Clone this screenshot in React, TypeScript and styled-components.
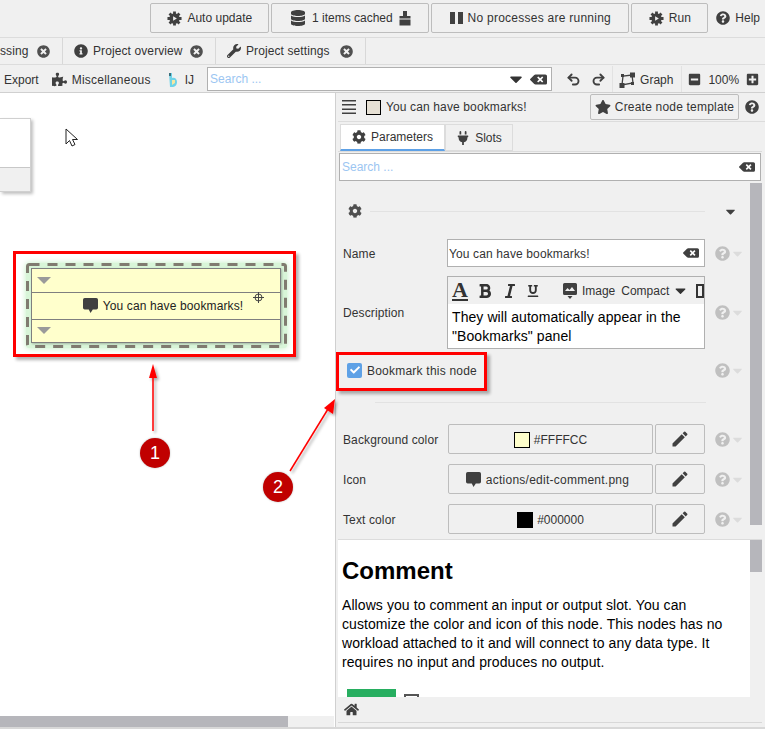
import React from "react";
import styled, { createGlobalStyle } from "styled-components";
import {
  FaBackspace,
  FaBold,
  FaCaretDown,
  FaCheck,
  FaCog,
  FaDatabase,
  FaHome,
  FaInfoCircle,
  FaItalic,
  FaMinusSquare,
  FaPlug,
  FaPlusSquare,
  FaPuzzlePiece,
  FaQuestionCircle,
  FaStar,
  FaTimesCircle,
  FaUnderline,
  FaWrench,
} from "react-icons/fa";
import { MdEdit } from "react-icons/md";
import { Redo2, Undo2 } from "lucide-react";

const GlobalStyle = createGlobalStyle`
  html, body {
    margin: 0;
    padding: 0;
    background: #f0f0f0;
  }
  * { box-sizing: border-box; }
`;

function GearPlay() {
  return (
    <svg width="15" height="15" viewBox="0 0 16 16">
      <g stroke="#404040" strokeWidth="3">
        <path d="M8 0.5v15M0.5 8h15M2.7 2.7l10.6 10.6M13.3 2.7L2.7 13.3" />
      </g>
      <circle cx="8" cy="8" r="5.5" fill="#404040" />
      <path d="M6.5 5.5v5l4-2.5z" fill="#f0f0f0" />
    </svg>
  );
}

function Bubble() {
  return (
    <svg width="15" height="15" viewBox="1 1 13 13">
      <path
        d="M2.5 1h10A1.5 1.5 0 0 1 14 2.500v7a1.5 1.5 0 0 1-1.500 1.500H9.500L7.500 14 6 11H2.500A1.5 1.500 0 0 1 1 9.500v-7A1.500 1.500 0 0 1 2.500 1z"
        fill="#404040"
      />
    </svg>
  );
}

function HelpCell() {
  return (
    <HelpWrap>
      <FaQuestionCircle size={15} />
      <FaCaretDown size={15} color="#dcdcdc" />
    </HelpWrap>
  );
}

export default function App() {
  return (
    <Page>
      <GlobalStyle />
      <TopBar>
        <ActionButton $width={119}><GearPlay />Auto update</ActionButton>
        <ActionButton $width={158} $gap={6}>
          <FaDatabase size={16} />
          1 items cached
          <svg width="12" height="15" viewBox="0 0 12 15">
            <rect x="4" y="0" width="4" height="5" fill="#404040" />
            <rect x="0.500" y="5" width="11" height="2.500" fill="#404040" />
            <path d="M0.500 8.500h11V14.500h-11z" fill="#404040" />
          </svg>
        </ActionButton>
        <ActionButton $width={198} $spaced>
          <svg width="13" height="12" viewBox="0 0 13 12">
            <rect width="5" height="12" fill="#404040" />
            <rect x="8" width="5" height="12" fill="#404040" />
          </svg>
          No processes are running
        </ActionButton>
        <ActionButton $width={77}><GearPlay />Run</ActionButton>
        <HelpLink><FaQuestionCircle size={14} />Help</HelpLink>
      </TopBar>

      <TabBar>
        <Tab $width={63}>ssing<TabClose><FaTimesCircle size={13} /></TabClose></Tab>
        <Tab $width={153} $padded><FaInfoCircle size={14} />Project overview<TabClose><FaTimesCircle size={13} /></TabClose></Tab>
        <Tab $width={150} $padded><FaWrench size={14} />Project settings<TabClose><FaTimesCircle size={13} /></TabClose></Tab>
      </TabBar>

      <ToolBar>
        <ToolText>Export</ToolText>
        <ToolText $spaced><FaPuzzlePiece size={15} />Miscellaneous</ToolText>
        <ToolText $gap={8} $indent={5}>
          <svg width="8" height="14" viewBox="0 0 8 14">
            <path d="M0 0h3v5c3-1 5 1 5 4 0 3-2 5-5 5H1z" fill="#6fd3e8" />
            <path d="M3 7h3v3l-3 2z" fill="#f6e7a0" />
            <rect width="2" height="3" fill="#3a6f7d" />
          </svg>
          IJ
        </ToolText>
        <SearchBox $width={345}>
          <SearchPlaceholder>Search ...</SearchPlaceholder>
          <FaCaretDown size={20} color="#333" />
          <FaBackspace size={17} color="#404040" />
        </SearchBox>
        <ToolIcons>
          <Undo2 size={15} strokeWidth={3} />
          <Redo2 size={15} strokeWidth={3} />
        </ToolIcons>
        <ToolDivider />
        <ToolText $gap={5} $right={8}>
          <svg width="16" height="16" viewBox="0 0 16 16">
            <path d="M3 13 4 4 13 3 14 11Z" fill="none" stroke="#404040" strokeWidth="1.300" />
            <rect x="0.500" y="11" width="5" height="5" fill="#404040" />
            <rect x="11" y="0.500" width="5" height="5" fill="#404040" />
            <rect x="2" y="2" width="3" height="3" fill="#404040" />
            <rect x="12" y="10" width="3" height="3" fill="#404040" />
          </svg>
          Graph
        </ToolText>
        <ToolDivider />
        <ZoomGroup>
          <FaMinusSquare size={13} />
          <span>100%</span>
          <FaPlusSquare size={13} />
        </ZoomGroup>
      </ToolBar>

      <Workspace>
        <Canvas>
          <CutNode>
            <CutNodeFooter />
          </CutNode>
          <Cursor width="14" height="20" viewBox="0 0 14 20">
            <path d="M1 1v15l3.500-3.500L7 18l3-1.500-2.500-5H12.500z" fill="#fff" stroke="#222" strokeWidth="1" />
          </Cursor>
          <BookmarkNode>
            <DashOutline width="261" height="85" viewBox="0 0 261 85">
              <rect x="1.500" y="1.500" width="258" height="82" rx="2" fill="none" stroke="#807b70" strokeWidth="3" strokeDasharray="10 8" />
            </DashOutline>
            <NodeBody>
              <NodeSlot><SlotCaret /></NodeSlot>
              <NodeTitle><Bubble /><WideText>You can have bookmarks!</WideText></NodeTitle>
              <NodeSlot><SlotCaret /></NodeSlot>
              <Crosshair width="11" height="11" viewBox="0 0 11 11">
                <circle cx="5.500" cy="5.500" r="3.500" fill="none" stroke="#444" />
                <path d="M5.500 0v11M0 5.500h11" stroke="#444" />
              </Crosshair>
            </NodeBody>
          </BookmarkNode>
          <HScroll><HThumb /></HScroll>
        </Canvas>

        <Inspector>
          <InspectorHead>
            <svg width="14" height="14" viewBox="0 0 14 14">
              <path d="M0 0h14v1.500H0zM0 4h14v1.500H0zM0 8.500h14V10H0zM0 12.500h14V14H0z" fill="#404040" />
            </svg>
            <HeadSwatch />
            <HeadTitle><WideText>You can have bookmarks!</WideText></HeadTitle>
            <TemplateButton><FaStar size={16} />Create node template</TemplateButton>
            <FaQuestionCircle size={14} color="#404040" />
          </InspectorHead>

          <InspectorTabs>
            <InspectorTab $active $width={105}><FaCog size={14} />Parameters</InspectorTab>
            <InspectorTab $width={68}><FaPlug size={14} />Slots</InspectorTab>
          </InspectorTabs>

          <WideSearch>
            <SearchPlaceholder>Search ...</SearchPlaceholder>
            <FaBackspace size={16} color="#404040" />
          </WideSearch>

          <ParamArea>
            <ParamScroll><ParamThumb /></ParamScroll>
            <SectionHead>
              <FaCog size={14} color="#505050" />
              <SectionLine />
              <FaCaretDown size={15} color="#404040" />
            </SectionHead>

            <ParamRow $top={12}>
              <ParamLabel>Name</ParamLabel>
              <TextField>
                <FieldValue><WideText>You can have bookmarks!</WideText></FieldValue>
                <FaBackspace size={16} color="#404040" />
              </TextField>
              <HelpCell />
            </ParamRow>

            <ParamRow $height={73} $top={8}>
              <ParamLabel>Description</ParamLabel>
              <Editor>
                <EditorTools>
                  <LetterA>A</LetterA>
                  <FaBold size={16} />
                  <FaItalic size={16} />
                  <FaUnderline size={12} />
                  <ImageTool>
                    <svg width="14" height="16" viewBox="0 0 14 16">
                      <path d="M1.500 0h11A1.500 1.500 0 0 1 14 1.500v9a1.500 1.500 0 0 1-1.500 1.500h-11A1.500 1.500 0 0 1 0 10.500v-9A1.500 1.500 0 0 1 1.500 0z" fill="#404040" />
                      <path d="M2 8l2.500-3L6.500 7 9 4l3 4z" fill="#f0f0f0" />
                      <path d="M4.500 13h5L7 16z" fill="#404040" />
                    </svg>
                    Image
                  </ImageTool>
                  <CompactTool>Compact<FaCaretDown size={17} /></CompactTool>
                  <CutBracket />
                </EditorTools>
                <EditorText>They will automatically appear in the "Bookmarks" panel</EditorText>
              </Editor>
              <HelpCell />
            </ParamRow>

            <CheckRow>
              <CheckBox><FaCheck size={10} color="#fff" /></CheckBox>
              <CheckLabel>Bookmark this node</CheckLabel>
              <HelpCell />
            </CheckRow>

            <RowDivider />

            <ParamRow>
              <ParamLabel>Background color</ParamLabel>
              <ValueButton><ColorSwatch $color="#ffffcc" />#FFFFCC</ValueButton>
              <EditButton><MdEdit size={20} /></EditButton>
              <HelpCell />
            </ParamRow>
            <ParamRow $top={10}>
              <ParamLabel>Icon</ParamLabel>
              <ValueButton $spaced><Bubble />actions/edit-comment.png</ValueButton>
              <EditButton><MdEdit size={20} /></EditButton>
              <HelpCell />
            </ParamRow>
            <ParamRow $top={10}>
              <ParamLabel>Text color</ParamLabel>
              <ValueButton><ColorSwatch $color="#000" />#000000</ValueButton>
              <EditButton><MdEdit size={20} /></EditButton>
              <HelpCell />
            </ParamRow>
          </ParamArea>

          <DocPane>
            <DocScroll><DocThumb /></DocScroll>
            <DocTitle>Comment</DocTitle>
            <DocText>
              Allows you to comment an input or output slot. You can customize the color and icon of this node. This
              nodes has no workload attached to it and will connect to any data type. It requires no input and produces
              no output.
            </DocText>
            <DocPreview>
              <GreenBar />
              <SmallBox />
            </DocPreview>
          </DocPane>

          <DocFooter><FaHome size={15} color="#404040" /></DocFooter>
        </Inspector>
      </Workspace>

      <Callout $x={13} $y={251} $w={283} $h={106} />
      <Callout $x={336} $y={352} $w={151} $h={39} />

      <Arrows width="765" height="729" viewBox="0 0 765 729">
        <defs>
          <filter id="arrowShadow" x="-30%" y="-30%" width="160%" height="160%">
            <feDropShadow dx="2" dy="2" stdDeviation="1.500" floodColor="#000" floodOpacity="0.350" />
          </filter>
        </defs>
        <g filter="url(#arrowShadow)">
          <path d="M153 431V376" stroke="#f00" strokeWidth="1.500" fill="none" />
          <path d="M153 364l4 14h-8z" fill="#f00" />
          <path d="M290 471l38-62" stroke="#f00" strokeWidth="1.500" fill="none" />
          <path d="M335 399l-2 15-9-6z" fill="#f00" />
        </g>
      </Arrows>
      <Badge $x={140} $y={438}>1</Badge>
      <Badge $x={263} $y={472}>2</Badge>
    </Page>
  );
}

const Page = styled.div`
  position: relative;
  width: 765px;
  height: 729px;
  overflow: hidden;
  display: flex;
  flex-direction: column;
  background: #f0f0f0;
  color: #333;
  font-family: "Liberation Sans", Arial, sans-serif;
  font-size: 12px;
  svg { flex-shrink: 0; }
`;

const WideText = styled.span`
  letter-spacing: 0.13px;
`;

const TopBar = styled.div`
  height: 38px;
  display: flex;
  align-items: flex-start;
  justify-content: flex-end;
  gap: 2px;
  padding: 3px 5px 0 0;
  border-bottom: 1px solid #dcdcdc;
`;

const ActionButton = styled.div<{ $width: number; $gap?: number; $spaced?: boolean }>`
  width: ${(p) => p.$width}px;
  height: 30px;
  display: flex;
  align-items: center;
  justify-content: center;
  gap: ${(p) => p.$gap ?? 5}px;
  border: 1px solid #bdbdbd;
  border-radius: 2px;
  background: #f0f0f0;
  white-space: nowrap;
  letter-spacing: ${(p) => (p.$spaced ? "0.25px" : "0")};
  svg { color: #404040; }
`;

const HelpLink = styled.div`
  height: 30px;
  margin-left: 6px;
  display: flex;
  align-items: center;
  gap: 5px;
  white-space: nowrap;
  svg { color: #404040; }
`;

const TabBar = styled.div`
  height: 27px;
  display: flex;
  border-bottom: 1px solid #dcdcdc;
`;

const Tab = styled.div<{ $width: number; $padded?: boolean }>`
  width: ${(p) => p.$width}px;
  display: flex;
  align-items: center;
  padding: 0 12px 0 ${(p) => (p.$padded ? 11 : 0)}px;
  gap: 5px;
  border-right: 1px solid #d8d8d8;
  white-space: nowrap;
  letter-spacing: 0.1px;
  svg { color: #404040; }
`;

const TabClose = styled.span`
  display: flex;
  margin-left: auto;
  svg { color: #505050; }
`;

const ToolBar = styled.div`
  height: 28px;
  display: flex;
  align-items: center;
  padding: 1px 0 0 4px;
  border-bottom: 1px solid #d0d0d0;
`;

const ToolText = styled.div<{ $gap?: number; $indent?: number; $right?: number; $spaced?: boolean }>`
  display: flex;
  align-items: center;
  gap: ${(p) => p.$gap ?? 5}px;
  padding-top: 1px;
  margin-left: ${(p) => p.$indent ?? 0}px;
  margin-right: ${(p) => p.$right ?? 13}px;
  white-space: nowrap;
  letter-spacing: ${(p) => (p.$spaced ? "0.23px" : "0")};
  svg { color: #404040; }
`;

const SearchBox = styled.div<{ $width: number }>`
  width: ${(p) => p.$width}px;
  height: 24px;
  display: flex;
  align-items: center;
  gap: 4px;
  padding: 0 4px 0 2px;
  background: #fff;
  border: 1px solid #b0b0b0;
`;

const SearchPlaceholder = styled.span`
  flex: 1;
  color: #9cc6f2;
  font-size: 12px;
`;

const ToolIcons = styled.div`
  display: flex;
  gap: 10px;
  margin-left: 14px;
  margin-right: 6px;
  color: #404040;
`;

const ToolDivider = styled.div`
  width: 1px;
  height: 26px;
  background: #e2e2e2;
  margin-right: 6px;
`;

const ZoomGroup = styled.div`
  display: flex;
  align-items: center;
  gap: 7px;
  padding-top: 1px;
  svg { color: #404040; }
`;

const Workspace = styled.div`
  height: 636px;
  display: flex;
  border-bottom: 2px solid #d8d8d8;
`;

const Canvas = styled.div`
  position: relative;
  width: 336px;
  background: #fff;
  border-right: 1px solid #d0d0d0;
`;

const CutNode = styled.div`
  position: absolute;
  left: 0;
  top: 25px;
  width: 31px;
  height: 74px;
  background: #fff;
  border: 1px solid #d0d0d0;
  border-left: 0;
  box-shadow: 2px 2px 3px rgba(0, 0, 0, 0.25);
  display: flex;
  flex-direction: column;
  justify-content: flex-end;
`;

const CutNodeFooter = styled.div`
  height: 24px;
  background: #f0f0f0;
  border-top: 1px solid #c8c8c8;
`;

const Cursor = styled.svg`
  position: absolute;
  left: 65px;
  top: 35px;
`;

const BookmarkNode = styled.div`
  position: absolute;
  left: 26px;
  top: 170px;
  width: 261px;
  height: 85px;
  padding: 5px 6px 5px 5px;
  border-radius: 3px;
  background: #d8f5d8;
  box-shadow: 0 0 6px #bfeebf;
`;

const DashOutline = styled.svg`
  position: absolute;
  left: 0;
  top: 0;
`;

const NodeBody = styled.div`
  position: relative;
  height: 75px;
  display: flex;
  flex-direction: column;
  background: #ffffcc;
  border: 1px solid #7f7f7f;
  color: #222;
  box-shadow: 1px 1px 2px rgba(0, 0, 0, 0.25);
`;

const NodeSlot = styled.div`
  flex: 1;
  display: flex;
  align-items: center;
  padding-left: 5px;
`;

const SlotCaret = styled.div`
  width: 0;
  height: 0;
  border-left: 7px solid transparent;
  border-right: 7px solid transparent;
  border-top: 7px solid #9a9a9a;
`;

const NodeTitle = styled.div`
  height: 28px;
  display: flex;
  align-items: center;
  justify-content: center;
  gap: 5px;
  padding-left: 14px;
  border-top: 1px solid #7f7f7f;
  border-bottom: 1px solid #7f7f7f;
`;

const Crosshair = styled.svg`
  position: absolute;
  left: 221px;
  top: 23px;
`;

const HScroll = styled.div`
  position: absolute;
  left: 0;
  bottom: 0;
  width: 334px;
  height: 11px;
  background: #f0f0f0;
`;

const HThumb = styled.div`
  width: 288px;
  height: 100%;
  background: #b6b6bb;
`;

const Inspector = styled.div`
  width: 429px;
  padding: 0 3px 0 2px;
  display: flex;
  flex-direction: column;
`;

const InspectorHead = styled.div`
  height: 29px;
  display: flex;
  align-items: center;
  padding: 0 6px 0 4px;
  border-bottom: 1px solid #dcdcdc;
  margin-right: -3px;
`;

const HeadSwatch = styled.span`
  width: 15px;
  height: 15px;
  margin-left: 10px;
  flex-shrink: 0;
  background: #e6e0d4;
  border: 1px solid #000;
`;

const ColorSwatch = styled.span<{ $color: string }>`
  width: 16px;
  height: 16px;
  flex-shrink: 0;
  background: ${(p) => p.$color};
  border: 1px solid #000;
`;

const HeadTitle = styled.div`
  flex: 1;
  margin-left: 5px;
`;

const TemplateButton = styled.div`
  height: 26px;
  width: 149px;
  display: flex;
  align-items: center;
  justify-content: center;
  gap: 4px;
  border: 1px solid #bdbdbd;
  border-radius: 2px;
  margin-right: 6px;
  white-space: nowrap;
  letter-spacing: 0.2px;
  svg { color: #404040; }
`;

const InspectorTabs = styled.div`
  height: 30px;
  display: flex;
  padding-left: 2px;
  border-bottom: 1px solid #dcdcdc;
`;

const InspectorTab = styled.div<{ $active?: boolean; $width: number }>`
  width: ${(p) => p.$width}px;
  display: flex;
  align-items: center;
  justify-content: center;
  gap: 5px;
  margin-top: 2px;
  background: ${(p) => (p.$active ? "#fff" : "#f0f0f0")};
  border: 1px solid #dcdcdc;
  border-bottom: ${(p) => (p.$active ? "2px solid #5ea1e6" : "1px solid #dcdcdc")};
  svg { color: #404040; }
`;

const WideSearch = styled.div`
  height: 28px;
  margin: 1px 1px 0 1px;
  display: flex;
  align-items: center;
  padding: 0 5px 0 2px;
  background: #fff;
  border: 1px solid #b0b0b0;
`;

const ParamArea = styled.div`
  position: relative;
  height: 358px;
  padding-top: 15px;
`;

const ParamScroll = styled.div`
  position: absolute;
  top: 2px;
  right: 0;
  width: 12px;
  bottom: 0;
  background: #f0f0f0;
`;

const ParamThumb = styled.div`
  height: 342px;
  background: #b6b6bb;
`;

const SectionHead = styled.div`
  height: 30px;
  display: flex;
  align-items: center;
  padding: 0 24px 0 10px;
  gap: 8px;
`;

const SectionLine = styled.div`
  width: 343px;
  height: 1px;
  background: #e2e2e2;
  margin-right: 10px;
`;

const ParamRow = styled.div<{ $height?: number; $top?: number }>`
  height: ${(p) => p.$height ?? 30}px;
  margin-top: ${(p) => p.$top ?? 0}px;
  display: flex;
  align-items: center;
  padding-left: 5px;
`;

const ParamLabel = styled.div`
  width: 104px;
  flex-shrink: 0;
  padding-top: 1px;
  white-space: nowrap;
  letter-spacing: 0.12px;
`;

const TextField = styled.div`
  width: 258px;
  height: 28px;
  display: flex;
  align-items: center;
  padding: 0 5px 0 1px;
  background: #fff;
  border: 1px solid #b0b0b0;
`;

const FieldValue = styled.span`
  flex: 1;
  padding-top: 1px;
`;

const HelpWrap = styled.div`
  display: flex;
  align-items: center;
  gap: 0;
  margin-left: 10px;
  color: #c0c0c0;
`;

const Editor = styled.div`
  width: 258px;
  height: 73px;
  overflow: hidden;
  background: #fff;
  border: 1px solid #b0b0b0;
`;

const EditorTools = styled.div`
  height: 27px;
  display: flex;
  align-items: center;
  gap: 9px;
  padding-left: 4px;
  background: #f0f0f0;
  color: #333;
  white-space: nowrap;
`;

const LetterA = styled.span`
  font-family: "Liberation Serif", serif;
  font-size: 22px;
  font-weight: 700;
  line-height: 18px;
  border-bottom: 2px solid #333;
`;

const ImageTool = styled.span`
  display: flex;
  align-items: center;
  gap: 5px;
  margin-left: 15px;
`;

const CompactTool = styled.span`
  display: flex;
  align-items: center;
  gap: 3px;
  margin-left: -3px;
`;

const CutBracket = styled.span`
  width: 8px;
  height: 14px;
  flex-shrink: 0;
  border: 2px solid #333;
  margin-left: -2px;
`;

const EditorText = styled.div`
  padding: 4px 4px 0;
  font-size: 14px;
  line-height: 19px;
  letter-spacing: 0.08px;
  color: #000;
`;

const CheckRow = styled.div`
  height: 42px;
  display: flex;
  align-items: center;
  padding-left: 9px;
`;

const CheckBox = styled.span`
  width: 15px;
  height: 15px;
  flex-shrink: 0;
  display: flex;
  align-items: center;
  justify-content: center;
  background: #5ea1e6;
  border-radius: 2px;
`;

const CheckLabel = styled.span`
  margin-left: 5px;
  width: 338px;
  padding-top: 1px;
  letter-spacing: 0.22px;
`;

const RowDivider = styled.div`
  width: 331px;
  height: 1px;
  margin: 11px 0 21px 37px;
  background: #e2e2e2;
`;

const ValueButton = styled.div<{ $spaced?: boolean }>`
  width: 205px;
  height: 30px;
  margin-left: 1px;
  display: flex;
  align-items: center;
  justify-content: center;
  gap: ${(p) => (p.$spaced ? 5 : 4)}px;
  padding: 1px ${(p) => (p.$spaced ? 6 : 0)}px 0 0;
  border: 1px solid #bdbdbd;
  border-radius: 2px;
  white-space: nowrap;
  letter-spacing: ${(p) => (p.$spaced ? "0.25px" : "0")};
`;

const EditButton = styled.div`
  width: 50px;
  height: 30px;
  margin-left: 2px;
  display: flex;
  align-items: center;
  justify-content: center;
  border: 1px solid #bdbdbd;
  border-radius: 2px;
  color: #404040;
`;

const DocPane = styled.div`
  position: relative;
  height: 158px;
  overflow: hidden;
  background: #fff;
  padding: 17px 16px 0 4px;
  border-top: 1px solid #dcdcdc;
`;

const DocScroll = styled.div`
  position: absolute;
  top: 0;
  right: 0;
  width: 12px;
  bottom: 0;
  background: #f0f0f0;
`;

const DocThumb = styled.div`
  height: 32px;
  background: #b6b6bb;
`;

const DocTitle = styled.h1`
  margin: 0 0 11px;
  font-size: 24px;
  line-height: 28px;
  color: #000;
`;

const DocText = styled.p`
  margin: 0;
  font-size: 14px;
  line-height: 19px;
  letter-spacing: 0.08px;
  color: #000;
`;

const DocPreview = styled.div`
  display: flex;
  align-items: flex-start;
  gap: 8px;
  margin: 17px 0 0 5px;
`;

const GreenBar = styled.div`
  width: 49px;
  height: 20px;
  background: #27ae60;
`;

const SmallBox = styled.div`
  width: 15px;
  height: 15px;
  margin-top: 5px;
  border: 2px solid #555;
`;

const DocFooter = styled.div`
  height: 26px;
  display: flex;
  align-items: center;
  padding-left: 6px;
  border-bottom: 1px solid #d8d8d8;
`;

const Callout = styled.div<{ $x: number; $y: number; $w: number; $h: number }>`
  position: absolute;
  left: ${(p) => p.$x}px;
  top: ${(p) => p.$y}px;
  width: ${(p) => p.$w}px;
  height: ${(p) => p.$h}px;
  border: 3px solid #f00;
  box-shadow: 3px 3px 3px rgba(0, 0, 0, 0.3);
`;

const Arrows = styled.svg`
  position: absolute;
  left: 0;
  top: 0;
  pointer-events: none;
`;

const Badge = styled.div<{ $x: number; $y: number }>`
  position: absolute;
  left: ${(p) => p.$x}px;
  top: ${(p) => p.$y}px;
  width: 30px;
  height: 30px;
  display: flex;
  align-items: center;
  justify-content: center;
  border-radius: 50%;
  background: #c00000;
  color: #fff;
  font-size: 18px;
  box-shadow: 0 0 2px rgba(0, 0, 0, 0.3);
`;
